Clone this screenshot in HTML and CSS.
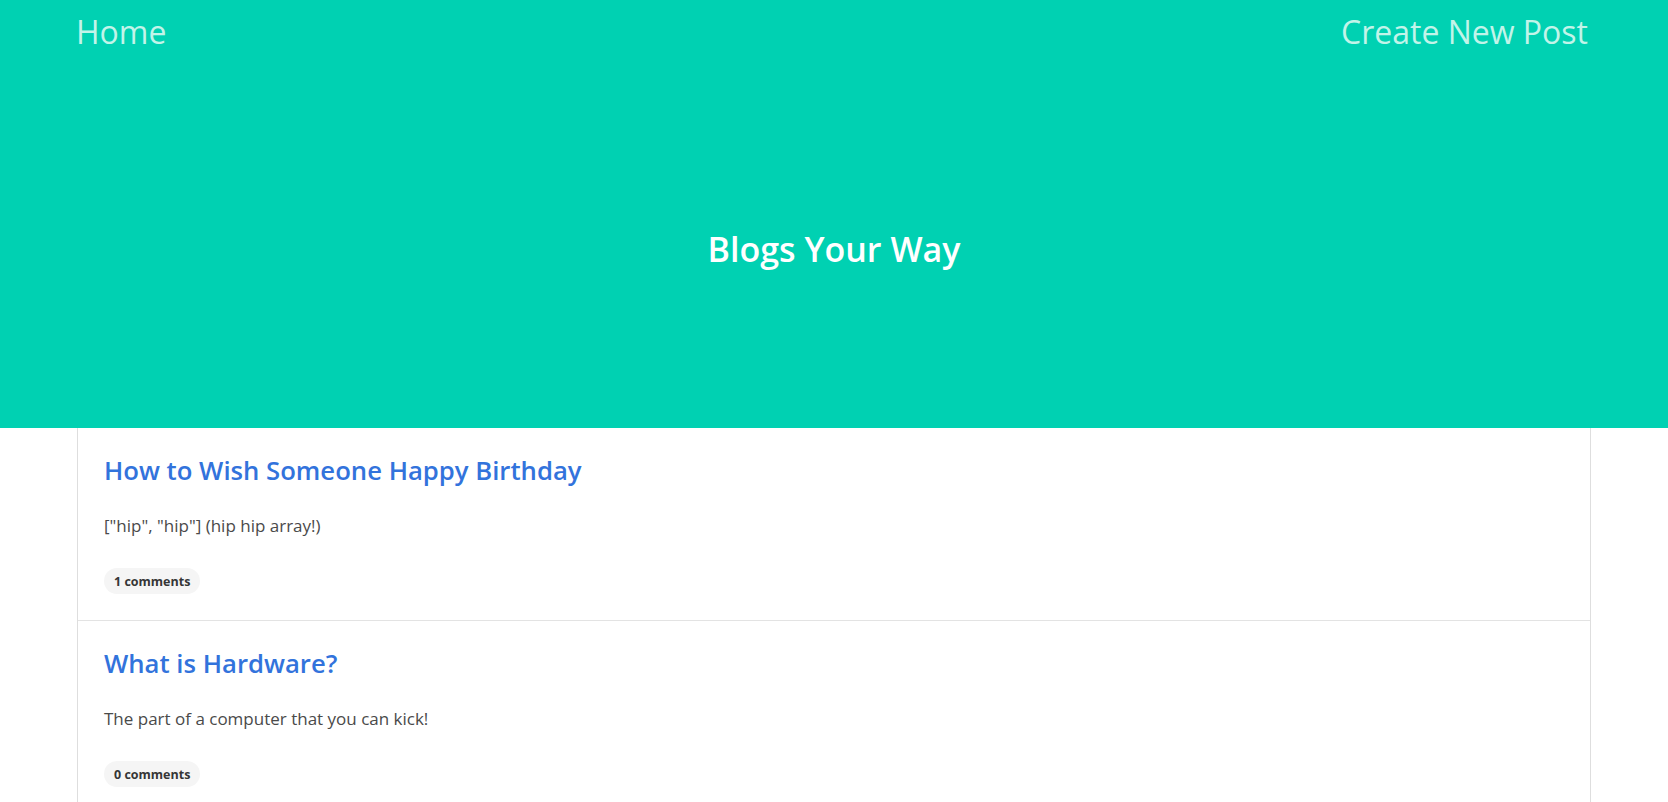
FILE: index.html
```html
<!DOCTYPE html>
<html lang="en">
<head>
<meta charset="utf-8">
<title>Blogs Your Way</title>
<link rel="stylesheet" href="styles.css">
</head>
<body>
<section class="hero">
  <nav class="nav">
    <a class="nav-link" href="#">Home</a>
    <a class="nav-link" href="#">Create New Post</a>
  </nav>
  <div class="hero-body">
    <h1 class="hero-title">Blogs Your Way</h1>
  </div>
</section>
<main class="posts">
  <article class="post">
    <h2 class="post-title"><a href="#">How to Wish Someone Happy Birthday</a></h2>
    <p class="post-body">["hip", "hip"] (hip hip array!)</p>
    <span class="tag">1 comments</span>
  </article>
  <article class="post">
    <h2 class="post-title"><a href="#">What is Hardware?</a></h2>
    <p class="post-body">The part of a computer that you can kick!</p>
    <span class="tag">0 comments</span>
  </article>
</main>
</body>
</html>
```
FILE: styles.css
```css
* { box-sizing: border-box; }
html, body { margin: 0; padding: 0; }
body {
  font-family: "Open Sans", "Noto Sans", sans-serif;
  color: #4a4a4a;
  background: #fff;
  overflow: hidden;
}
a { text-decoration: none; }

.hero {
  background: #00d1b2;
  height: 428px;
  display: flex;
  flex-direction: column;
}
.nav {
  display: flex;
  justify-content: space-between;
  padding: 10px 80px 0 76px;
}
.nav-link {
  color: #c2f4e9;
  font-size: 32px;
  line-height: 44px;
}
.hero-body {
  flex: 1;
  display: flex;
  justify-content: center;
  padding-top: 175px;
}
.hero-title {
  margin: 0;
  color: #fff;
  font-size: 34px;
  font-weight: 600;
  line-height: 40px;
}

.posts {
  margin: 0 77px;
  border-left: 1px solid #dedede;
  border-right: 1px solid #dedede;
}
.post {
  padding: 28px 26px 26px 26px;
  border-bottom: 1px solid #e3e3e3;
  display: flex;
  flex-direction: column;
  align-items: flex-start;
}
.post-title {
  margin: 0;
  font-size: 25.7px;
  font-weight: 600;
  line-height: 30px;
}
.post-title a { color: #3273dc; }
.post-body {
  margin: 27px 0 0 0;
  font-size: 17px;
  line-height: 26px;
  color: #4a4a4a;
}
.tag {
  margin-top: 29px;
  display: inline-flex;
  align-items: center;
  height: 26px;
  padding: 0 10px;
  border-radius: 13px;
  background: #f5f5f5;
  color: #363636;
  font-size: 12.5px;
  font-weight: 700;
}
```
